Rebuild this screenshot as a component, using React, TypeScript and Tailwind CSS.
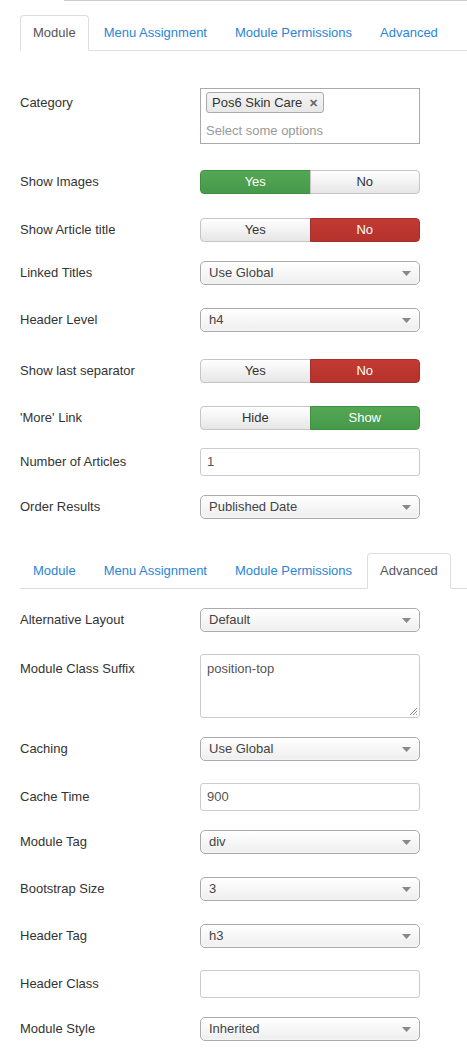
import type { ReactNode } from "react";

type Tab = { key: string; label: string };

const TABS: Tab[] = [
	{ key: "module", label: "Module" },
	{ key: "menu", label: "Menu Assignment" },
	{ key: "perms", label: "Module Permissions" },
	{ key: "advanced", label: "Advanced" },
];

function Tabs({ active, className }: { active: string; className: string }) {
	return (
		<ul className={`ml-[20px] flex border-b border-[#dddddd] ${className}`}>
			{TABS.map((tab) => {
				const isActive = tab.key === active;
				return (
					<li
						key={tab.key}
						className={`-mb-px mr-[2px] rounded-t-[4px] border px-[12px] py-[8px] leading-[18px] ${
							isActive
								? "border-[#dddddd] border-b-white bg-white text-[#555555]"
								: "border-transparent text-[#2a85d8]"
						}`}
					>
						{tab.label}
					</li>
				);
			})}
		</ul>
	);
}

function Row({ label, gap, tall, children }: { label: string; gap: string; tall?: boolean; children: ReactNode }) {
	return (
		<div className={`flex pl-[20px] ${tall ? "items-start" : "items-center"} ${gap}`}>
			<div className={`w-[180px] leading-[18px] text-[#333333] ${tall ? "pt-[6px]" : ""}`}>{label}</div>
			<div className="w-[220px]">{children}</div>
		</div>
	);
}

function Select({ value }: { value: string }) {
	return (
		<div className="flex h-[24px] items-center justify-between rounded-[5px] border border-[#aaaaaa] bg-gradient-to-b from-white to-[#eeeeee] pl-[8px] pr-[8px] text-[#444444] shadow-[inset_0_0_3px_#ffffff]">
			<span className="leading-[18px]">{value}</span>
			<svg width="9" height="5" viewBox="0 0 9 5">
				<path d="M0 0 L9 0 L4.5 5 Z" fill="#888888" />
			</svg>
		</div>
	);
}

function Toggle({ left, right, on }: { left: string; right: string; on: "left-green" | "right-red" | "right-green" }) {
	const base = "flex h-[24px] flex-1 items-center justify-center leading-[18px]";
	const off = "bg-gradient-to-b from-white to-[#e6e6e6] text-[#333333] border border-[#c5c5c5]";
	const green = "bg-gradient-to-b from-[#54a754] to-[#46994a] text-white border border-[#3e8f3e]";
	const red = "bg-gradient-to-b from-[#c23a33] to-[#b5322c] text-white border border-[#a3302a]";
	const leftCls = on === "left-green" ? green : off;
	const rightCls = on === "right-red" ? red : on === "right-green" ? green : off;
	return (
		<div className="flex">
			<div className={`${base} ${leftCls} rounded-l-[4px]`}>{left}</div>
			<div className={`${base} ${rightCls} -ml-px rounded-r-[4px]`}>{right}</div>
		</div>
	);
}

function Input({ value }: { value?: string }) {
	return (
		<div className="flex h-[28px] items-center rounded-[3px] border border-[#cccccc] bg-white px-[6px] leading-[18px] text-[#555555]">
			{value}
		</div>
	);
}

export default function App() {
	return (
		<div
			className="min-h-[1053px] w-[467px] bg-white pb-[12px] text-[13px] text-[#333333]"
			style={{ fontFamily: '"Liberation Sans", Arial, sans-serif' }}
		>
			<div className="ml-[64px] h-px bg-[#cccccc]" />

			<Tabs active="module" className="mt-[14px]" />

			<Row label="Category" gap="mt-[37px]" tall>
				<div className="h-[56px] border border-[#aaaaaa] bg-white px-[5px] pt-[3px]">
					<div className="flex">
						<span className="flex h-[21px] items-center gap-[7px] rounded-[3px] border border-[#aaaaaa] bg-gradient-to-b from-[#f4f4f4] to-[#e8e8e8] px-[5px] leading-[18px] text-[#333333]">
							Pos6 Skin Care
							<span className="text-[11px] font-bold text-[#666666]">✕</span>
						</span>
					</div>
					<div className="mt-[9px] leading-[18px] text-[#999999]">Select some options</div>
				</div>
			</Row>

			<Row label="Show Images" gap="mt-[26px]">
				<Toggle left="Yes" right="No" on="left-green" />
			</Row>
			<Row label="Show Article title" gap="mt-[24px]">
				<Toggle left="Yes" right="No" on="right-red" />
			</Row>
			<Row label="Linked Titles" gap="mt-[19px]">
				<Select value="Use Global" />
			</Row>
			<Row label="Header Level" gap="mt-[23px]">
				<Select value="h4" />
			</Row>
			<Row label="Show last separator" gap="mt-[27px]">
				<Toggle left="Yes" right="No" on="right-red" />
			</Row>
			<Row label="'More' Link" gap="mt-[23px]">
				<Toggle left="Hide" right="Show" on="right-green" />
			</Row>
			<Row label="Number of Articles" gap="mt-[18px]">
				<Input value="1" />
			</Row>
			<Row label="Order Results" gap="mt-[19px]">
				<Select value="Published Date" />
			</Row>

			<Tabs active="advanced" className="mt-[34px]" />

			<Row label="Alternative Layout" gap="mt-[19px]">
				<Select value="Default" />
			</Row>
			<Row label="Module Class Suffix" gap="mt-[22px]" tall>
				<div className="relative h-[64px] rounded-[3px] border border-[#cccccc] bg-white px-[6px] pt-[5px] leading-[18px] text-[#555555]">
					position-top
					<svg className="absolute bottom-[2px] right-[2px]" width="8" height="8" viewBox="0 0 8 8">
						<path d="M8 1 L1 8 M8 4 L4 8 M8 7 L7 8" stroke="#888888" strokeWidth="1" />
					</svg>
				</div>
			</Row>
			<Row label="Caching" gap="mt-[19px]">
				<Select value="Use Global" />
			</Row>
			<Row label="Cache Time" gap="mt-[22px]">
				<Input value="900" />
			</Row>
			<Row label="Module Tag" gap="mt-[19px]">
				<Select value="div" />
			</Row>
			<Row label="Bootstrap Size" gap="mt-[23px]">
				<Select value="3" />
			</Row>
			<Row label="Header Tag" gap="mt-[23px]">
				<Select value="h3" />
			</Row>
			<Row label="Header Class" gap="mt-[22px]">
				<Input />
			</Row>
			<Row label="Module Style" gap="mt-[19px]">
				<Select value="Inherited" />
			</Row>
		</div>
	);
}
